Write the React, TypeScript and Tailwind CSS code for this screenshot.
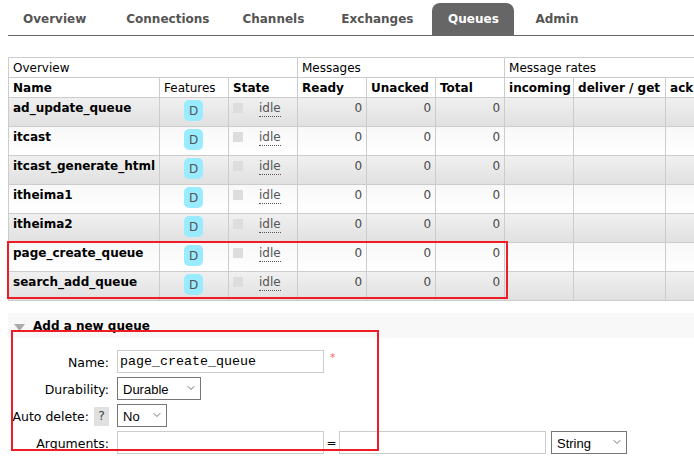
import { ChevronDown } from "lucide-react";

const queues = [
  "ad_update_queue",
  "itcast",
  "itcast_generate_html",
  "itheima1",
  "itheima2",
  "page_create_queue",
  "search_add_queue",
];

const tabs = [
  { label: "Overview", pad: "pl-[15px] pr-[21px]" },
  { label: "Connections", pad: "pl-[19px] pr-[15px]" },
  { label: "Channels", pad: "px-[18px]" },
  { label: "Exchanges", pad: "px-[19px]" },
];

const cell = "border border-[#ccc] px-1 align-top";
const head = "border border-[#ccc] px-1 text-left whitespace-nowrap overflow-hidden";

function Select({ label, width }: { label: string; width: string }) {
  return (
    <div className={`relative h-[23px] ${width}`}>
      <select className="h-full w-full appearance-none border border-[#767676] bg-white pl-[5px] pt-[2px] font-['Liberation_Sans',sans-serif] text-[13px] text-black outline-none">
        <option>{label}</option>
      </select>
      <ChevronDown className="pointer-events-none absolute right-[4px] top-[5px] h-[12px] w-[12px] text-[#444]" strokeWidth={1.5} />
    </div>
  );
}

function Input({ value = "", width = "w-[207px]" }: { value?: string; width?: string }) {
  return (
    <input
      readOnly
      value={value}
      className={`h-[23px] ${width} border border-[#ccc] bg-white px-[2px] font-['Liberation_Mono',monospace] text-[13.33px] text-black outline-none`}
    />
  );
}

function FormRow({ children, label }: { children: React.ReactNode; label: React.ReactNode }) {
  return (
    <div className="flex h-[23px] items-center">
      <div className="flex w-[109px] shrink-0 items-center justify-end whitespace-nowrap pt-[4px] text-[12.5px] text-black">{label}</div>
      <div className="ml-2 flex items-center">{children}</div>
    </div>
  );
}

export default function App() {
  return (
    <div className="relative h-[457px] w-[694px] overflow-hidden bg-white font-['DejaVu_Sans',sans-serif] text-[12px] text-[#484848]">
      {/* nav */}
      <div className="ml-2 flex h-[36px] items-end border-b border-[#666]">
        {tabs.map((t) => (
          <a key={t.label} className={`flex h-[32px] items-center pb-[1px] font-bold text-[#555] ${t.pad}`}>
            {t.label}
          </a>
        ))}
        <a className="flex h-[32px] w-[82px] items-center justify-center rounded-t-[8px] bg-[#666] pb-[1px] font-bold text-white">
          Queues
        </a>
        <a className="flex h-[32px] items-center px-[21px] pb-[1px] font-bold text-[#555]">Admin</a>
      </div>

      {/* queue table */}
      <table className="ml-2 mt-[21px] w-[720px] table-fixed border-collapse text-[12px]">
        <colgroup>
          <col className="w-[151px]" />
          <col className="w-[69px]" />
          <col className="w-[69px]" />
          <col className="w-[69px]" />
          <col className="w-[69px]" />
          <col className="w-[69px]" />
          <col className="w-[69px]" />
          <col className="w-[92px]" />
          <col className="w-[63px]" />
        </colgroup>
        <thead>
          <tr className="h-[20px] text-black">
            <th colSpan={3} className={`${head} font-normal`}>Overview</th>
            <th colSpan={3} className={`${head} font-normal`}>Messages</th>
            <th colSpan={3} className={`${head} font-normal`}>Message rates</th>
          </tr>
          <tr className="h-[20px] text-black">
            <th className={`${head} font-bold`}>Name</th>
            <th className={`${head} font-normal`}>Features</th>
            <th className={`${head} font-bold`}>State</th>
            <th className={`${head} font-bold`}>Ready</th>
            <th className={`${head} font-bold`}>Unacked</th>
            <th className={`${head} font-bold`}>Total</th>
            <th className={`${head} font-bold`}>incoming</th>
            <th className={`${head} font-bold`}>deliver / get</th>
            <th className={`${head} font-bold`}>ack</th>
          </tr>
        </thead>
        <tbody>
          {queues.map((q, i) => (
            <tr
              key={q}
              className={`h-[29px] ${i % 2 === 0 ? "bg-gradient-to-b from-[#f0f0f0] to-[#e0e0e0]" : "bg-gradient-to-b from-[#f8f8f8] to-[#ffffff]"}`}
            >
              <td className={`${cell} whitespace-nowrap pt-[2px] font-bold leading-[16px] text-black`}>{q}</td>
              <td className={`${cell} h-[29px] pr-[5px] pt-[2px] text-center`}>
                <span className="inline-flex h-[21px] w-[19px] items-center justify-center rounded-[5px] bg-[#99ebff] text-[12px] text-[#555]">D</span>
              </td>
              <td className={`${cell} pt-[2px]`}>
                <div className="flex h-[18px] items-start">
                  <span className="mt-[3px] h-[10px] w-[10px] bg-[#ddd]" />
                  <span className="ml-[16px] border-b border-dotted border-[#555] leading-[16px] text-[#555]">idle</span>
                </div>
              </td>
              <td className={`${cell} pt-[2px] pr-[4px] text-right leading-[16px]`}>0</td>
              <td className={`${cell} pt-[2px] pr-[4px] text-right leading-[16px]`}>0</td>
              <td className={`${cell} pt-[2px] pr-[4px] text-right leading-[16px]`}>0</td>
              <td className={cell} />
              <td className={cell} />
              <td className={cell} />
            </tr>
          ))}
        </tbody>
      </table>

      {/* add queue section */}
      <div className="ml-2 mt-[12px] flex h-[25px] items-end bg-[#f8f8f8] pb-[4px]">
        <svg width="11" height="7" viewBox="0 0 11 7" className="mb-[3px] ml-[6px]">
          <polygon points="0,0 11,0 5.5,7" fill="#aaa" />
        </svg>
        <span className="ml-2 font-bold leading-[16px] text-black">Add a new queue</span>
      </div>

      <div className="mt-[12px] flex flex-col gap-[4px]">
        <FormRow label="Name:">
          <Input value="page_create_queue" />
          <span className="-mt-[6px] ml-[6px] text-[11px] text-[#f66]">*</span>
        </FormRow>
        <FormRow label="Durability:">
          <Select label="Durable" width="w-[84px]" />
        </FormRow>
        <FormRow
          label={
            <>
              Auto delete:
              <span className="-mt-[2px] ml-[5px] flex h-[19px] w-[15px] items-center justify-center bg-[#e0e0e0] text-[#444]">?</span>
            </>
          }
        >
          <Select label="No" width="w-[50px]" />
        </FormRow>
        <FormRow label="Arguments:">
          <Input />
          <span className="w-[15px] text-center text-black">=</span>
          <Input />
          <div className="ml-[5px]">
            <Select label="String" width="w-[76px]" />
          </div>
        </FormRow>
      </div>

      {/* red annotation boxes */}
      <div className="pointer-events-none absolute left-[7px] top-[241px] h-[58px] w-[501px] border-2 border-[#ee1c25]" />
      <div className="pointer-events-none absolute left-[11px] top-[330px] h-[121px] w-[368px] border-2 border-[#ee1c25]" />
    </div>
  );
}
